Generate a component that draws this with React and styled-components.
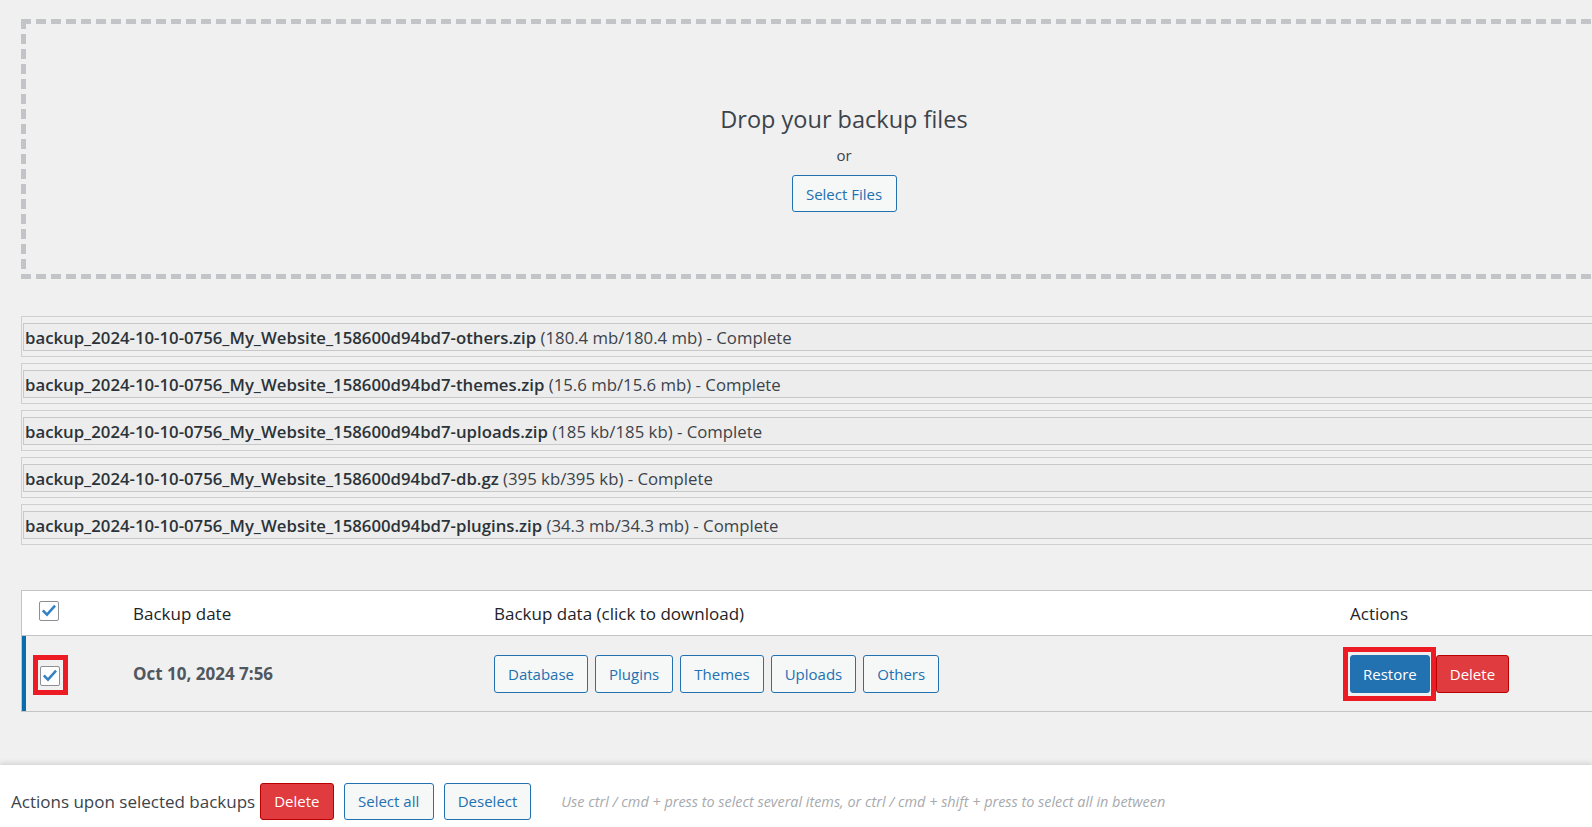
import React, { useState } from 'react'
import styled, { createGlobalStyle, css } from 'styled-components'

const GlobalStyle = createGlobalStyle`
  html, body {
    margin: 0;
    padding: 0;
    background: #f0f0f1;
    overflow: hidden;
  }
  body {
    font-family: "Segoe UI", "Open Sans", "Noto Sans", sans-serif;
    color: #3c434a;
  }
`

const Main = styled.div`
  width: 1646px;
  padding: 19px 0 0 21px;
`

// dashed frame drawn with gradients so the dash rhythm stays 10px on / 5px off
const dash = (dir) =>
  `repeating-linear-gradient(${dir}, #c3c4c7 0 10px, transparent 10px 15px)`

const DropZone = styled.div`
  height: 260px;
  box-sizing: border-box;
  padding-top: 84px;
  display: flex;
  flex-direction: column;
  align-items: center;
  background-image: ${dash('90deg')}, ${dash('90deg')}, ${dash('180deg')}, ${dash('180deg')};
  background-size: 100% 5px, 100% 5px, 5px 100%, 5px 100%;
  background-position: left top, left bottom, left top, right top;
  background-repeat: no-repeat;
`

const DropTitle = styled.div`
  font-size: 23.5px;
  line-height: 32px;
  color: #3c434a;
`

const DropOr = styled.div`
  margin-top: 9px;
  font-size: 15px;
  line-height: 22px;
  color: #3c434a;
`

const OutlineButton = styled.button`
  height: ${(p) => p.$h ?? 37}px;
  padding: 0 ${(p) => p.$pad ?? 13}px;
  border: 1px solid #2271b1;
  border-radius: 3px;
  background: #f6f7f7;
  color: #2271b1;
  font-family: inherit;
  font-size: 15px;
  cursor: pointer;
  box-sizing: border-box;
`

const SelectFiles = styled(OutlineButton)`
  margin-top: 9px;
  width: 105px;
`

const FileList = styled.div`
  margin-top: 37px;
  display: flex;
  flex-direction: column;
  gap: 6px;
`

const FileRow = styled.div`
  border: 1px solid #cfcfcf;
  padding: 6px 1px 5px 1px;
`

const FileBar = styled.div`
  height: 26px;
  border: 1px solid #c8c8c8;
  background: #ededed;
  display: flex;
  align-items: center;
  padding-left: 1px;
  font-size: 16.75px;
  white-space: nowrap;
  color: #3c434a;

  b {
    font-weight: 600;
    color: #2c3338;
  }
`

const Table = styled.div`
  margin-top: 45px;
  border: 1px solid #c3c4c7;
`

const Row = styled.div`
  display: grid;
  grid-template-columns: 111px 361px 856px 1fr;
  align-items: center;
  ${(p) =>
    p.$head
      ? css`
          height: 44px;
          background: #fff;
          border-bottom: 1px solid #c3c4c7;
        `
      : css`
          height: 75px;
          background: #f0f0f1;
          box-shadow: inset 4px 0 0 #0a6cad;
        `}
`

const HeadCell = styled.div`
  font-size: 17px;
  color: #1d2327;
`

const CheckCell = styled.div`
  padding-left: ${(p) => p.$pad}px;
  margin-bottom: ${(p) => p.$lift ?? 0}px;
  display: flex;
  align-items: center;
`

const Highlight = styled.div`
  display: flex;
  border: 5px solid #ed1c24;
  padding: ${(p) => p.$pad};
  margin-left: ${(p) => p.$shift ?? 0}px;
`

const Box = styled.span`
  width: 20px;
  height: 20px;
  box-sizing: border-box;
  border: 1px solid #8c8f94;
  border-radius: 2px;
  background: #fff;
  display: flex;
  align-items: center;
  justify-content: center;
`

const DateCell = styled.div`
  font-size: 17px;
  font-weight: 700;
  color: #50575e;
`

const ButtonGroup = styled.div`
  display: flex;
  align-items: center;
  gap: ${(p) => p.$gap ?? 7}px;
`

const PrimaryButton = styled.button`
  height: ${(p) => p.$h ?? 38}px;
  box-sizing: border-box;
  padding: 0 ${(p) => p.$pad ?? 13}px;
  border: 1px solid ${(p) => (p.$danger ? '#b80000' : '#2271b1')};
  border-radius: 3px;
  background: ${(p) => (p.$danger ? '#e03b3e' : '#2271b1')};
  color: #fff;
  font-family: inherit;
  font-size: 15px;
  cursor: pointer;
`

const BottomBar = styled.div`
  margin-top: 53px;
  height: 62px;
  box-sizing: border-box;
  padding: 10px 0 0 11px;
  background: #fff;
  box-shadow: 0 -2px 5px rgba(0, 0, 0, 0.12);
  display: flex;
  align-items: center;
`

const BarLabel = styled.span`
  font-size: 17px;
  color: #3c434a;
  margin-right: 5px;
`

const Hint = styled.span`
  margin-left: 30px;
  font-size: 14.4px;
  font-style: italic;
  color: #a7aaad;
`

const Check = () => (
  <svg width="14" height="14" viewBox="0 0 14 14">
    <path d="M1.8 7.4 L5 10.6 L12.2 2.6" fill="none" stroke="#3582c4" strokeWidth="2.6" strokeLinecap="square" />
  </svg>
)

const Checkbox = ({ checked, onClick }) => (
  <Box onClick={onClick}>{checked && <Check />}</Box>
)

const files = [
  ['backup_2024-10-10-0756_My_Website_158600d94bd7-others.zip', '(180.4 mb/180.4 mb)'],
  ['backup_2024-10-10-0756_My_Website_158600d94bd7-themes.zip', '(15.6 mb/15.6 mb)'],
  ['backup_2024-10-10-0756_My_Website_158600d94bd7-uploads.zip', '(185 kb/185 kb)'],
  ['backup_2024-10-10-0756_My_Website_158600d94bd7-db.gz', '(395 kb/395 kb)'],
  ['backup_2024-10-10-0756_My_Website_158600d94bd7-plugins.zip', '(34.3 mb/34.3 mb)'],
]

const parts = ['Database', 'Plugins', 'Themes', 'Uploads', 'Others']

export default function App() {
  const [selected, setSelected] = useState(true)
  const toggle = () => setSelected((v) => !v)

  return (
    <>
      <GlobalStyle />
      <Main>
        <DropZone>
          <DropTitle>Drop your backup files</DropTitle>
          <DropOr>or</DropOr>
          <SelectFiles>Select Files</SelectFiles>
        </DropZone>

        <FileList>
          {files.map(([name, size]) => (
            <FileRow key={name}>
              <FileBar>
                <b>{name}</b>&nbsp;{size} - Complete
              </FileBar>
            </FileRow>
          ))}
        </FileList>

        <Table>
          <Row $head>
            <CheckCell $pad={17} $lift={4}>
              <Checkbox checked={selected} onClick={toggle} />
            </CheckCell>
            <HeadCell>Backup date</HeadCell>
            <HeadCell>Backup data (click to download)</HeadCell>
            <HeadCell>Actions</HeadCell>
          </Row>
          <Row>
            <CheckCell $pad={11} $lift={-2}>
              <Highlight $pad="6px 3px 4px 2px">
                <Checkbox checked={selected} onClick={toggle} />
              </Highlight>
            </CheckCell>
            <DateCell>Oct 10, 2024 7:56</DateCell>
            <ButtonGroup>
              {parts.map((p) => (
                <OutlineButton key={p} $h={38}>
                  {p}
                </OutlineButton>
              ))}
            </ButtonGroup>
            <ButtonGroup $gap={0}>
              <Highlight $pad="3px 1px 3px 2px" $shift={-7}>
                <PrimaryButton $pad={12}>Restore</PrimaryButton>
              </Highlight>
              <PrimaryButton $danger $pad={13}>Delete</PrimaryButton>
            </ButtonGroup>
          </Row>
        </Table>
      </Main>

      <BottomBar>
        <BarLabel>Actions upon selected backups</BarLabel>
        <ButtonGroup $gap={10}>
          <PrimaryButton $danger $pad={13} $h={37}>Delete</PrimaryButton>
          <OutlineButton $pad={13.5}>Select all</OutlineButton>
          <OutlineButton $pad={13}>Deselect</OutlineButton>
        </ButtonGroup>
        <Hint>
          Use ctrl / cmd + press to select several items, or ctrl / cmd + shift + press to select all in between
        </Hint>
      </BottomBar>
    </>
  )
}
